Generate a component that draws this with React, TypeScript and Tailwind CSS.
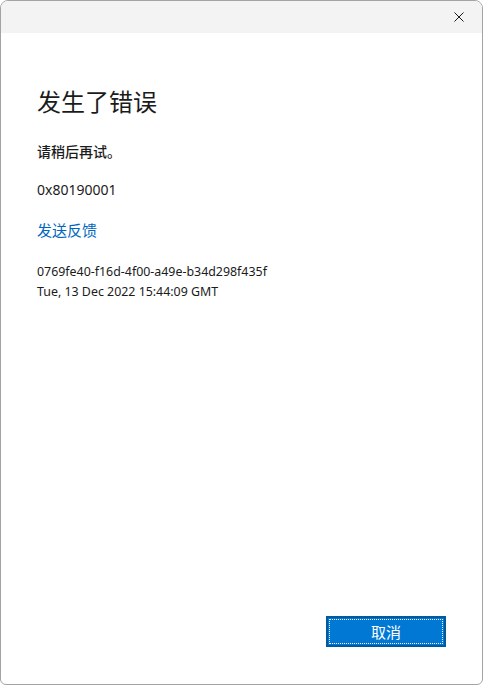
export default function App() {
  return (
    <div
      className="w-[483px] h-[685px] flex flex-col overflow-hidden bg-white border border-[#a3a3a3] rounded-t-lg rounded-b-md text-[#1b1b1b]"
      style={{ fontFamily: '"Noto Sans", "Noto Sans CJK SC", sans-serif' }}
    >
      {/* Title bar */}
      <div className="h-[32px] bg-[#f3f3f3] flex items-center justify-end shrink-0">
        <button className="w-[46px] h-[32px] flex items-center justify-center" aria-label="Close">
          <svg width="10" height="10" viewBox="0 0 10 10" fill="none">
            <path d="M0.5 0.5L9.5 9.5M9.5 0.5L0.5 9.5" stroke="#1a1a1a" strokeWidth="1" />
          </svg>
        </button>
      </div>

      {/* Body */}
      <div className="flex-1 flex flex-col px-[36px] pt-[53px] pb-[37px]">
        <h1 className="text-[24px] leading-[32px] font-normal">发生了错误</h1>
        <p className="mt-[24px] text-[14px] leading-[20px] font-medium">请稍后再试。</p>
        <p className="mt-[18px] text-[14px] leading-[20px]">0x80190001</p>
        <a href="#" className="mt-[20px] text-[15px] leading-[20px] text-[#0067c0] self-start">
          发送反馈
        </a>
        <div className="mt-[22px] text-[12.4px] leading-[20px]">
          <p>0769fe40-f16d-4f00-a49e-b34d298f435f</p>
          <p>Tue, 13 Dec 2022 15:44:09 GMT</p>
        </div>

        <div className="mt-auto flex justify-end">
          <button className="relative w-[120px] h-[31px] bg-[#0078d4] border-2 border-[#005a9e] text-white text-[15px] leading-[20px] flex items-center justify-center">
            <span className="absolute inset-[1px] border border-dotted border-white" />
            取消
          </button>
        </div>
      </div>
    </div>
  );
}
